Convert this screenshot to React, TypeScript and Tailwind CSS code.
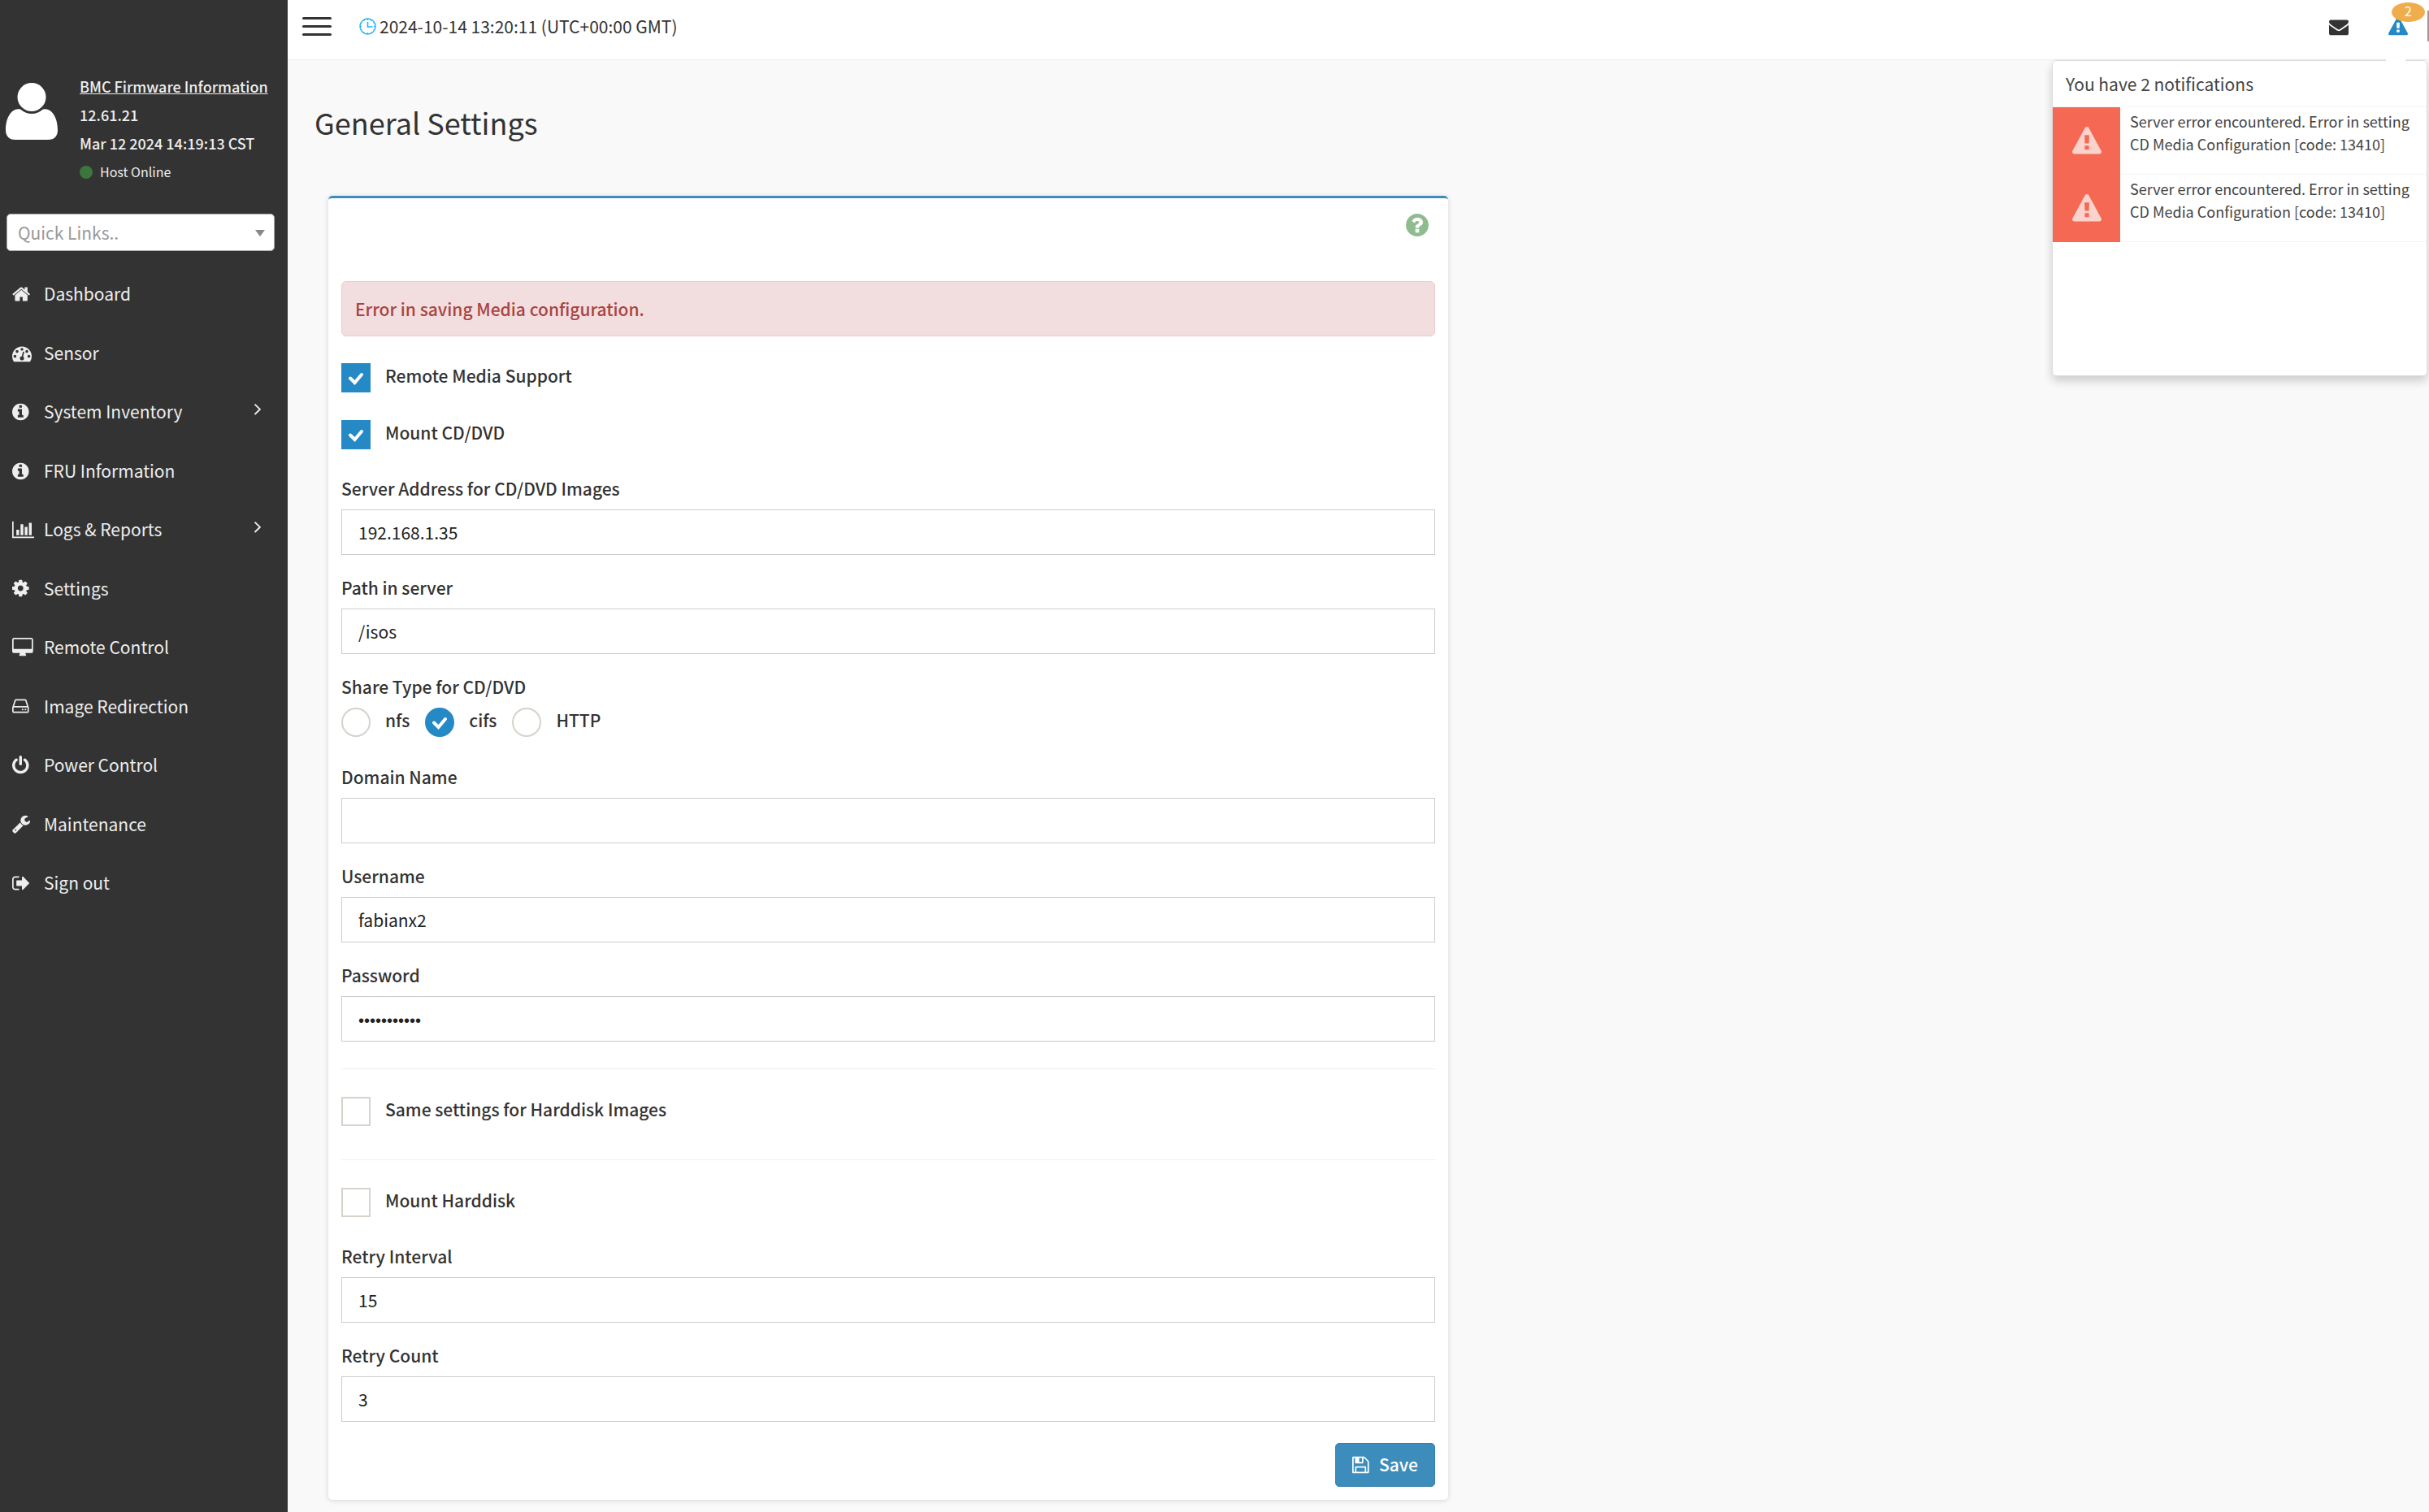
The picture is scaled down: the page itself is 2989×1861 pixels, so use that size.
import { useState } from "react";

const CIRCLE = "q0 209-103 385.5t-279.5 279.5-385.5 103-385.5-103-279.5-279.5-103-385.5 103-385.5 279.5-279.5 385.5-103 385.5 103 279.5 279.5 103 385.5z";

const icons = {
  home: {
    box: "64 0 1664 1792",
    d: "M1472 992v480q0 26-19 45t-45 19h-384v-384h-256v384h-384q-26 0-45-19t-19-45v-480q0-1 .5-3t.5-3l575-474 575 474q1 2 1 6zm223-69l-62 74q-8 9-21 11h-3q-13 0-21-7l-692-577-692 577q-12 8-24 7-13-2-21-11l-62-74q-8-10-7-23.5t11-21.5l719-599q32-26 76-26t76 26l244 204v-195q0-14 9-23t23-9h192q14 0 23 9t9 23v408l219 182q10 8 11 21.5t-7 23.5z",
  },
  gauge: {
    box: "0 0 1792 1792",
    d: "M384 1152q0-53-37.5-90.5t-90.5-37.5-90.5 37.5-37.5 90.5 37.5 90.5 90.5 37.5 90.5-37.5 37.5-90.5zm192-448q0-53-37.5-90.5t-90.5-37.5-90.5 37.5-37.5 90.5 37.5 90.5 90.5 37.5 90.5-37.5 37.5-90.5zm428 481l101-382q6-26-7.5-48.5t-38.5-29.5-48 6.5-30 39.5l-101 382q-60 5-107 43.5t-63 98.5q-20 77 20 146t117 89 146-20 89-117q16-60-6-117t-72-91zm660-33q0-53-37.5-90.5t-90.5-37.5-90.5 37.5-37.5 90.5 37.5 90.5 90.5 37.5 90.5-37.5 37.5-90.5zm-640-640q0-53-37.5-90.5t-90.5-37.5-90.5 37.5-37.5 90.5 37.5 90.5 90.5 37.5 90.5-37.5 37.5-90.5zm448 192q0-53-37.5-90.5t-90.5-37.5-90.5 37.5-37.5 90.5 37.5 90.5 90.5 37.5 90.5-37.5 37.5-90.5zm320 448q0 261-141 483-19 29-54 29h-1402q-35 0-54-29-141-221-141-483 0-182 71-348t191-286 286-191 348-71 348 71 286 191 191 286 71 348z",
  },
  info: {
    box: "128 0 1536 1792",
    d: "M1152 1376v-160q0-14-9-23t-23-9h-96v-512q0-14-9-23t-23-9h-320q-14 0-23 9t-9 23v160q0 14 9 23t23 9h96v320h-96q-14 0-23 9t-9 23v160q0 14 9 23t23 9h448q14 0 23-9t9-23zm-128-896v-160q0-14-9-23t-23-9h-192q-14 0-23 9t-9 23v160q0 14 9 23t23 9h192q14 0 23-9t9-23zm640 416" + CIRCLE,
  },
  chart: {
    box: "0 0 2048 1792",
    d: "M640 896v512h-256v-512h256zm384-512v1024h-256v-1024h256zm1024 1152v128h-2048v-1536h128v1408h1920zm-640-896v768h-256v-768h256zm384-384v1152h-256v-1152h256z",
  },
  cog: {
    box: "128 0 1536 1792",
    d: "M1152 896q0-106-75-181t-181-75-181 75-75 181 75 181 181 75 181-75 75-181zm512-109v222q0 12-8 23t-20 13l-185 28q-19 54-39 91 35 50 107 138 10 12 10 25t-9 23q-27 37-99 108t-94 71q-12 0-26-9l-138-108q-44 23-91 38-16 136-29 186-7 28-36 28h-222q-14 0-24.5-8.5t-11.5-21.5l-28-184q-49-16-90-37l-141 107q-10 9-25 9-14 0-25-11-126-114-165-168-7-10-7-23 0-12 8-23 15-21 51-66.5t54-70.5q-27-50-41-99l-183-27q-13-2-21-12.5t-8-23.5v-222q0-12 8-23t19-13l186-28q14-46 39-92-40-57-107-138-10-12-10-24 0-10 9-23 26-36 98.5-107.5t94.5-71.5q13 0 26 10l138 107q44-23 91-38 16-136 29-186 7-28 36-28h222q14 0 24.5 8.5t11.5 21.5l28 184q49 16 90 37l142-107q9-9 24-9 13 0 25 10 129 119 165 170 7 8 7 22 0 12-8 23-15 21-51 66.5t-54 70.5q26 50 41 98l183 28q13 2 21 12.5t8 23.5z",
  },
  desktop: {
    box: "-64 0 1920 1792",
    d: "M1728 992v-832q0-13-9.5-22.5t-22.5-9.5h-1600q-13 0-22.5 9.5t-9.5 22.5v832q0 13 9.5 22.5t22.5 9.5h1600q13 0 22.5-9.5t9.5-22.5zm128-832v1088q0 66-47 113t-113 47h-544q0 37 16 77.5t32 71 16 43.5q0 26-19 45t-45 19h-512q-26 0-45-19t-19-45q0-14 16-44t32-70 16-78h-544q-66 0-113-47t-47-113v-1088q0-66 47-113t113-47h1600q66 0 113 47t47 113z",
  },
  disk: {
    box: "128 0 1536 1792",
    d: "M1168 1216q0 33-23.5 56.5t-56.5 23.5-56.5-23.5-23.5-56.5 23.5-56.5 56.5-23.5 56.5 23.5 23.5 56.5zm256 0q0 33-23.5 56.5t-56.5 23.5-56.5-23.5-23.5-56.5 23.5-56.5 56.5-23.5 56.5 23.5 23.5 56.5zm112 160v-320q0-13-9.5-22.5t-22.5-9.5h-1216q-13 0-22.5 9.5t-9.5 22.5v320q0 13 9.5 22.5t22.5 9.5h1216q13 0 22.5-9.5t9.5-22.5zm-1230-480h1180l-157-482q-4-13-16-21.5t-26-8.5h-782q-14 0-26 8.5t-16 21.5zm1358 160v320q0 66-47 113t-113 47h-1216q-66 0-113-47t-47-113v-320q0-25 16-75l197-606q17-53 63-86t101-33h782q55 0 101 33t63 86l197 606q16 50 16 75z",
  },
  power: {
    box: "128 0 1536 1792",
    d: "M1664 896q0 156-61 298t-164 245-245 164-298 61-298-61-245-164-164-245-61-298q0-182 80.5-343t226.5-270q43-32 95.5-25t83.5 50q32 42 24.5 94.5t-49.5 84.5q-98 74-151.5 181t-53.5 228q0 104 40.5 198.5t109.5 163.5 163.5 109.5 198.5 40.5 198.5-40.5 163.5-109.5 109.5-163.5 40.5-198.5q0-121-53.5-228t-151.5-181q-42-32-49.5-84.5t24.5-94.5q31-43 84-50t95 25q146 109 226.5 270t80.5 343zm-640-768v640q0 52-38 90t-90 38-90-38-38-90v-640q0-52 38-90t90-38 90 38 38 90z",
  },
  wrench: {
    box: "64 0 1664 1792",
    d: "M448 1472q0-26-19-45t-45-19-45 19-19 45 19 45 45 19 45-19 19-45zm644-420l-682 682q-37 37-90 37-52 0-91-37l-106-108q-38-36-38-90 0-53 38-91l681-681q39 98 114.5 173.5t173.5 114.5zm634-435q0 39-23 106-47 134-164.5 217.5t-258.5 83.5q-185 0-316.5-131.5t-131.5-316.5 131.5-316.5 316.5-131.5q58 0 121.5 16.5t107.5 46.5q16 11 16 28t-16 28l-293 169v224l193 107q5-3 79-48.5t135.5-81 70.5-35.5q15 0 23.5 10t8.5 25z",
  },
  signOut: {
    box: "64 0 1600 1792",
    d: "M704 1440q0 4 1 20t.5 26.5-3 23.5-10 19.5-20.5 6.5h-320q-119 0-203.5-84.5t-84.5-203.5v-704q0-119 84.5-203.5t203.5-84.5h320q13 0 22.5 9.5t9.5 22.5q0 4 1 20t.5 26.5-3 23.5-10 19.5-20.5 6.5h-320q-66 0-113 47t-47 113v704q0 66 47 113t113 47h312l11.5 1 11.5 3 8 5.5 7 9 2 13.5zm928-544q0 26-19 45l-544 544q-19 19-45 19t-45-19-19-45v-288h-448q-26 0-45-19t-19-45v-384q0-26 19-45t45-19h448v-288q0-26 19-45t45-19 45 19l544 544q19 19 19 45z",
  },
  save: {
    box: "128 0 1536 1792",
    d: "M512 1536h768v-384h-768v384zm896 0h128v-896q0-14-10-38.5t-20-34.5l-281-281q-10-10-34-20t-39-10v416q0 40-28 68t-68 28h-576q-40 0-68-28t-28-68v-416h-128v1280h128v-416q0-40 28-68t68-28h832q40 0 68 28t28 68v416zm-384-928v-320q0-13-9.5-22.5t-22.5-9.5h-192q-13 0-22.5 9.5t-9.5 22.5v320q0 13 9.5 22.5t22.5 9.5h192q13 0 22.5-9.5t9.5-22.5zm640 32v928q0 40-28 68t-68 28h-1344q-40 0-68-28t-28-68v-1344q0-40 28-68t68-28h928q40 0 88 20t76 48l280 280q28 28 48 76t20 88z",
  },
  warning: {
    box: "0 0 1792 1792",
    d: "M1024 1375v-190q0-14-9.5-23.5t-22.5-9.5h-192q-13 0-22.5 9.5t-9.5 23.5v190q0 14 9.5 23.5t22.5 9.5h192q13 0 22.5-9.5t9.5-23.5zm-2-374l18-459q0-12-10-19-13-11-24-11h-220q-11 0-24 11-10 7-10 21l17 457q0 10 10 16.5t24 6.5h185q14 0 23.5-6.5t10.5-16.5zm-14-934l768 1408q35 63-2 126-17 29-46.5 46t-63.5 17h-1536q-34 0-63.5-17t-46.5-46q-37-63-2-126l768-1408q17-31 47-49t65-18 65 18 47 49z",
  },
  envelope: {
    box: "0 0 1792 1792",
    d: "M1792 710v794q0 66-47 113t-113 47h-1472q-66 0-113-47t-47-113v-794q44 49 101 87 362 246 497 345 57 42 92.5 65.5t94.5 48 110 24.5h2q51 0 110-24.5t94.5-48 92.5-65.5q170-123 498-345 57-39 100-87zm0-294q0 79-49 151t-122 123q-376 261-468 325-10 7-42.5 31t-54 38.5-52 32.5-57.5 27-50 9h-2q-23 0-50-9t-57.5-27-52-32.5-54-38.5-42.5-31q-91-64-262-182.5t-205-142.5q-62-42-117-115.5t-55-136.5q0-78 41.5-130t118.5-52h1472q65 0 112.5 47t47.5 113z",
  },
  question: {
    box: "128 128 1536 1536",
    d: "M1024 1376v-192q0-14-9-23t-23-9h-192q-14 0-23 9t-9 23v192q0 14 9 23t23 9h192q14 0 23-9t9-23zm256-672q0-88-55.5-163t-138.5-116-170-41q-243 0-371 213-15 24 8 42l132 100q7 6 19 6 16 0 25-12 53-68 86-92 34-24 86-24 48 0 85.5 26t37.5 59q0 38-20 61t-68 45q-63 28-115.5 86.5t-52.5 125.5v36q0 14 9 23t23 9h192q14 0 23-9t9-23q0-19 21.5-49.5t54.5-49.5q32-18 49-28.5t46-35 44.5-48 28-60.5 12.5-81zm384 192" + CIRCLE,
  },
  angle: {
    box: "588 0 584 1792",
    d: "M1171 960q0 13-10 23l-466 466q-10 10-23 10t-23-10l-50-50q-10-10-10-23t10-23l393-393-393-393q-10-10-10-23t10-23l50-50q10-10 23-10t23 10l466 466q10 10 10 23z",
  },
};

type IconName = keyof typeof icons;

function Icon({ name, className = "h-6 w-auto" }: { name: IconName; className?: string }) {
  return (
    <svg viewBox={icons[name].box} preserveAspectRatio="none" fill="currentColor" className={className} aria-hidden="true">
      <path d={icons[name].d} />
    </svg>
  );
}

function UserIcon() {
  return (
    <svg viewBox="0 0 64 70" fill="white" className="mt-[13px] h-[70px] w-16 shrink-0" aria-hidden="true">
      <circle cx="32" cy="17.5" r="17.5" />
      <path d="M18 32.500C23 36.500 27 38 32 38S41 36.500 46 32.500C57 30.500 64 43 64 58C64 65.500 60 70 52 70H12C4 70 0 65.500 0 58C0 43 7 30.500 18 32.500Z" />
    </svg>
  );
}

// thin ring with hour ticks
function ClockIcon() {
  return (
    <svg viewBox="0 0 21 21" fill="none" stroke="#1fb0fb" className="size-[21px]" aria-hidden="true">
      <circle cx="10.5" cy="10.5" r="9.5" strokeWidth="1.4" />
      <path d="M10.500 5v6h6" strokeWidth="1.6" />
      <path d="M10.500 1v2M10.500 18v2M1 10.500h2M18 10.500h2M5.500 2.300l.8 1.400M14.700 17.300l.8 1.400M2.300 5.500l1.400.8M17.300 14.700l1.400.8M15.500 2.300l-.8 1.400M6.300 17.300l-.8 1.400M18.700 5.500l-1.400.8M3.700 14.700l-1.400.8" strokeWidth="1" />
    </svg>
  );
}

const menu: { label: string; icon: IconName; children?: boolean }[] = [
  { label: "Dashboard", icon: "home" },
  { label: "Sensor", icon: "gauge" },
  { label: "System Inventory", icon: "info", children: true },
  { label: "FRU Information", icon: "info" },
  { label: "Logs & Reports", icon: "chart", children: true },
  { label: "Settings", icon: "cog" },
  { label: "Remote Control", icon: "desktop" },
  { label: "Image Redirection", icon: "disk" },
  { label: "Power Control", icon: "power" },
  { label: "Maintenance", icon: "wrench" },
  { label: "Sign out", icon: "signOut" },
];

const notifications = [
  "Server error encountered. Error in setting CD Media Configuration [code: 13410]",
  "Server error encountered. Error in setting CD Media Configuration [code: 13410]",
];

function Sidebar() {
  return (
    <aside className="w-[354px] shrink-0 bg-[#333] text-[#eee]">
      <div className="flex pt-[89px] pl-[7px]">
        <UserIcon />
        <div className="ml-[27px] text-[18px] leading-[35px] font-medium whitespace-nowrap">
          <a href="#firmware" className="block underline">BMC Firmware Information</a>
          <p>12.61.21</p>
          <p>Mar 12 2024 14:19:13 CST</p>
          <p className="flex items-center gap-[9px] text-[16px] font-normal">
            <span className="size-4 rounded-full bg-[#3c763d]" />
            Host Online
          </p>
        </div>
      </div>
      <div className="relative mt-[34px] mr-4 ml-2">
        <select
          aria-label="Quick Links"
          className="h-[46px] w-full appearance-none rounded-[5px] border border-[#aaa] bg-white px-[13px] pt-0.5 text-[21px] text-[#999]"
        >
          <option>Quick Links..</option>
        </select>
        <svg viewBox="0 0 12 8" className="pointer-events-none absolute top-5 right-3 h-2 w-3" fill="#888">
          <path d="M0 0h12L6 8z" />
        </svg>
      </div>
      <nav className="mt-[17px]">
        <ul className="grid h-[797px] auto-rows-fr">
          {menu.map((item) => (
            <li key={item.label}>
              <a href="#menu" className="flex h-full items-center pr-[33px] pl-[15px] text-[21px]">
                <span className="w-[39px]">
                  <Icon name={item.icon} />
                </span>
                <span className="flex-1">{item.label}</span>
                {item.children && <Icon name="angle" className="mb-2 h-6 w-2" />}
              </a>
            </li>
          ))}
        </ul>
      </nav>
    </aside>
  );
}

function Notifications() {
  return (
    <section className="absolute top-[74px] right-[2px] h-[389px] w-[462px] rounded-[5px] border border-[#ddd] bg-white text-[#444] shadow-[0_6px_12px_rgba(0,0,0,0.175)]">
      <span className="absolute -top-1 right-[26px] h-1 w-6 bg-white" />
      <h2 className="h-[57px] border-b border-[#f4f4f4] pl-4 text-[21px] leading-[56px]">
        You have {notifications.length} notifications
      </h2>
      <ul>
        {notifications.map((text, idx) => (
          <li key={idx} className="flex h-[83px] border-b border-[#f4f4f4]">
            <span className="-mb-px flex w-[83px] shrink-0 items-center justify-center bg-[#f56954] text-white/70">
              <Icon name="warning" className="size-9" />
            </span>
            <p className="pt-[3px] pl-3 text-[18px] leading-7">{text}</p>
          </li>
        ))}
      </ul>
    </section>
  );
}

function Header() {
  return (
    <header className="relative flex h-[74px] items-center border-b border-[#eee] bg-white pb-2 text-[#333]">
      <button type="button" aria-label="Toggle menu" className="ml-[18px] flex w-9 flex-col gap-[7px]">
        <span className="h-[3px] rounded-full bg-[#333]" />
        <span className="h-[3px] rounded-full bg-[#333]" />
        <span className="h-[3px] rounded-full bg-[#333]" />
      </button>
      <p className="ml-[34px] flex items-center gap-1 text-[21px]">
        <ClockIcon />
        2024-10-14 13:20:11 (UTC+00:00 GMT)
      </p>
      <button type="button" aria-label="Messages" className="ml-auto">
        <Icon name="envelope" className="size-6" />
      </button>
      <button type="button" aria-label="Notifications" className="relative mr-6 ml-[49px] text-[#2489c5]">
        <Icon name="warning" className="size-6" />
        <span className="absolute -top-[18px] left-1 flex h-6 w-[41px] items-center justify-center rounded-[50%] bg-[#f0ad4e] pb-1 text-[16px] text-white">
          2
        </span>
      </button>
      <span className="mt-[13px] h-[38px] w-[2px] self-start bg-[#999]" />
      <Notifications />
    </header>
  );
}

function CheckMark() {
  return (
    <svg viewBox="0 0 36 36" fill="none" stroke="white" strokeWidth="4" strokeLinecap="round" className="pointer-events-none absolute inset-0 hidden size-9 peer-checked:block">
      <path d="M11 18.500l5.500 5.500 8.500-10" />
    </svg>
  );
}

function Checkbox({ label, checked }: { label: string; checked?: boolean }) {
  return (
    <label className="mb-[34px] flex w-fit items-center gap-[18px] font-medium">
      <span className="relative size-9">
        <input
          type="checkbox"
          defaultChecked={checked}
          className="peer block size-9 appearance-none border-2 border-[#d7d3cb] bg-white checked:border-[#2489c5] checked:bg-[#2489c5]"
        />
        <CheckMark />
      </span>
      <span className="pb-1">{label}</span>
    </label>
  );
}

function Field({ id, label, value = "", type = "text" }: { id: string; label: string; value?: string; type?: string }) {
  return (
    <div className="mb-[26px]">
      <label htmlFor={id} className="mb-3 block leading-7 font-medium">{label}</label>
      <input
        id={id}
        type={type}
        defaultValue={value}
        className="block h-14 w-full border border-[#ccc] bg-white px-5 text-[21px] text-[#222] [&[type=password]]:pt-1 [&[type=password]]:font-['Liberation_Sans',sans-serif] [&[type=password]]:text-[20px]"
      />
    </div>
  );
}

function ShareType() {
  const [shareType, setShareType] = useState("cifs");

  return (
    <fieldset className="mb-[35px] font-medium">
      <legend className="mb-3 leading-7">Share Type for CD/DVD</legend>
      <div className="flex gap-[19px]">
        {["nfs", "cifs", "HTTP"].map((type) => (
          <label key={type} className="flex items-center gap-[18px]">
            <span className="relative size-9">
              <input
                type="radio"
                name="shareType"
                checked={shareType === type}
                onChange={() => setShareType(type)}
                className="peer block size-9 appearance-none rounded-full border-2 border-[#d7d3cb] bg-white checked:border-[#2489c5] checked:bg-[#2489c5]"
              />
              <CheckMark />
            </span>
            <span className="pb-1">{type}</span>
          </label>
        ))}
      </div>
    </fieldset>
  );
}

export default function App() {
  return (
    <div className="flex min-h-screen bg-[#f9f9f9] font-['Noto_Sans_CJK_SC',sans-serif] text-[#333]">
      <Sidebar />
      <div className="min-w-0 flex-1">
        <Header />
        <main className="px-[33px] pt-[52px] pb-[15px]">
          <h1 className="text-[36px] leading-[48px]">General Settings</h1>
          <form
            onSubmit={(e) => e.preventDefault()}
            className="mt-[67px] ml-[17px] max-w-[1378px] rounded-[5px] border-t-3 border-[#3c8dbc] bg-white px-4 pt-[19px] pb-4 text-[21px] shadow-[0_1px_6px_rgba(0,0,0,0.15)]"
          >
            <div className="mb-[55px] flex justify-end pr-2">
              <button type="button" aria-label="Help">
                <Icon name="question" className="size-7 text-[#8fbc8f]" />
              </button>
            </div>
            <p role="alert" className="mb-[33px] h-[68px] rounded-[6px] border border-[#ebccd1] bg-[#f2dede] px-4 leading-[66px] font-medium text-[#a94442]">
              Error in saving Media configuration.
            </p>
            <Checkbox label="Remote Media Support" checked />
            <Checkbox label="Mount CD/DVD" checked />
            <Field id="server" label="Server Address for CD/DVD Images" value="192.168.1.35" />
            <Field id="path" label="Path in server" value="/isos" />
            <ShareType />
            <Field id="domain" label="Domain Name" />
            <Field id="username" label="Username" value="fabianx2" />
            <Field id="password" label="Password" value="password123" type="password" />
            <hr className="mt-[33px] mb-[34px] border-[#eee]" />
            <Checkbox label="Same settings for Harddisk Images" />
            <hr className="mt-[41px] mb-[34px] border-[#eee]" />
            <Checkbox label="Mount Harddisk" />
            <Field id="interval" label="Retry Interval" value="15" />
            <Field id="count" label="Retry Count" value="3" />
            <div className="flex justify-end">
              <button
                type="submit"
                className="flex h-[54px] items-center gap-3 rounded-[5px] border border-[#367fa9] bg-[#3c8dbc] px-5 font-medium text-white"
              >
                <Icon name="save" />
                Save
              </button>
            </div>
          </form>
        </main>
      </div>
    </div>
  );
}
